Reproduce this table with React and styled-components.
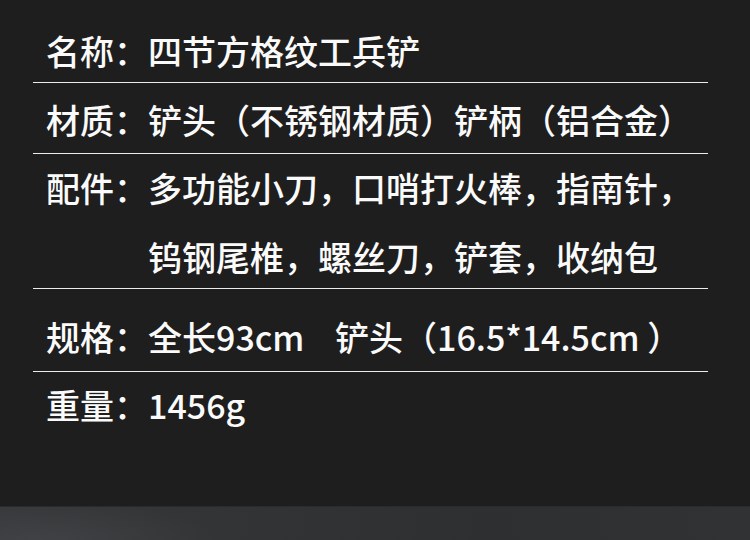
import React from "react";
import styled, { createGlobalStyle } from "styled-components";

const GlobalStyle = createGlobalStyle`
  html, body {
    margin: 0;
    padding: 0;
    background: #1e1e1e;
  }
`;

const Page = styled.div`
  width: 750px;
  height: 540px;
  display: flex;
  flex-direction: column;
  background: #1e1e1e;
  color: #fafafa;
  font-family: "Noto Sans CJK SC", "Noto Sans", sans-serif;
  overflow: hidden;
`;

const Specs = styled.div`
  flex: 1;
  padding: 0 42px 0 33px;
`;

const Row = styled.div`
  display: flex;
  padding: ${(p) => p.$pt || 0}px 0 ${(p) => p.$pb || 0}px 13px;
  border-bottom: ${(p) => (p.$last ? "none" : "1px solid #ececec")};
`;

const Label = styled.span`
  flex-shrink: 0;
  font-size: 34px;
  font-weight: 500;
  line-height: 62px;
  white-space: nowrap;
`;

const Value = styled.div`
  display: flex;
  flex-direction: column;
  gap: ${(p) => p.$gap || 0}px;
  font-size: 34px;
  font-weight: 500;
  line-height: 62px;
  white-space: pre;
`;

const Photo = styled.div`
  height: 33px;
  border-top: 1px solid #2a2b2d;
  background:
    radial-gradient(ellipse 180px 40px at 5% 100%, rgba(70, 72, 75, 0.6), transparent),
    linear-gradient(90deg, #37383a 0%, #323335 35%, #2e2f31 65%, #313234 100%);
`;

const rows = [
  { label: "名称：", lines: ["四节方格纹工兵铲"], pt: 20 },
  { label: "材质：", lines: ["铲头（不锈钢材质）铲柄（铝合金）"], pt: 6, pb: 2 },
  {
    label: "配件：",
    lines: ["多功能小刀，口哨打火棒，指南针，", "钨钢尾椎，螺丝刀，铲套，收纳包"],
    pt: 3,
    gap: 7
  },
  { label: "规格：", lines: ["全长93cm    铲头（16.5*14.5cm ）"], pt: 17, pb: 3 },
  { label: "重量：", lines: ["1456g"], pt: 2, last: true }
];

export default function App() {
  return (
    <Page>
      <GlobalStyle />
      <Specs>
        {rows.map((r) => (
          <Row key={r.label} $pt={r.pt} $pb={r.pb} $last={r.last}>
            <Label>{r.label}</Label>
            <Value $gap={r.gap}>
              {r.lines.map((l) => (
                <span key={l}>{l}</span>
              ))}
            </Value>
          </Row>
        ))}
      </Specs>
      <Photo />
    </Page>
  );
}
